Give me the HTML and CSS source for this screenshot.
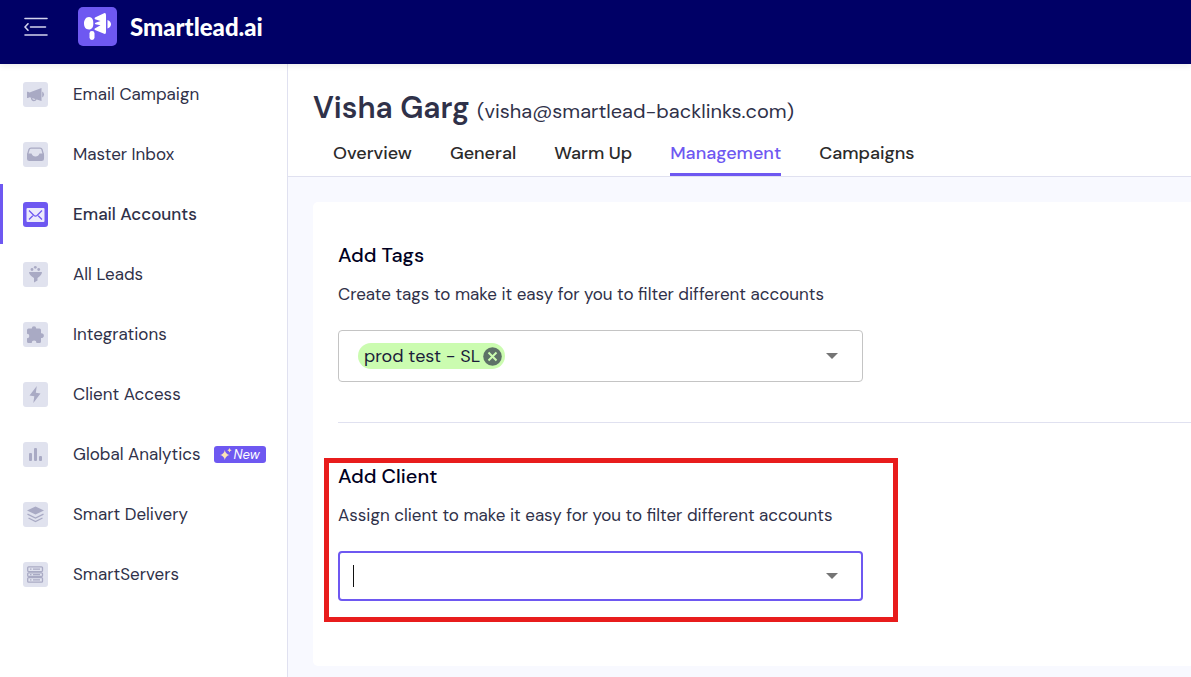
FILE: index.html
```html
<!DOCTYPE html>
<html lang="en">
<head>
    <meta charset="UTF-8">
    <meta name="viewport" content="width=device-width, initial-scale=1.0">
    <title>Smartlead.ai - Email Accounts</title>
    <link rel="stylesheet" href="styles.css">
</head>
<body>
    <header class="topbar">
        <button class="menu-toggle" type="button" aria-label="Collapse menu">
            <svg width="24" height="20" viewBox="0 0 24 20" fill="none" stroke="#d3d4ee" stroke-width="1.6" stroke-linecap="round">
                <path d="M1 1.500H23M6.500 10H21.500M1 18H23M4 6.800L1 10L4 13.200"/>
            </svg>
        </button>
        <a class="brand" href="#">
            <svg width="39" height="39" viewBox="0 0 39 39">
                <rect width="39" height="39" rx="5" fill="#6e58f1"/>
                <g fill="#fff">
                    <path d="M11 10C15 10 15.500 14 15.300 17C15.300 20 14 22.500 11 22.500C7.500 22.500 6 19.500 6 16.500C6 13.500 7.500 10 11 10Z"/>
                    <path d="M17 10.500L25.500 6.400Q28 5.300 28 8V25Q28 27.800 25.500 26.500L17 23Q15.500 22 17.200 21.200L22.500 18.300L17.500 17.200Q16 16.500 17.500 15.800L22.500 14L17 12.300Q16 11.300 17 10.500Z"/>
                    <path d="M29.500 13Q33 14.500 33 17.300Q33 20 29.500 21.600Z"/>
                    <rect x="11.500" y="24" width="5" height="9" rx="2.400"/>
                </g>
            </svg>
            <span>Smartlead.ai</span>
        </a>
    </header>

    <div class="layout">
        <nav class="sidebar">
            <a class="nav-item" href="#">
                <svg class="nav-icon" viewBox="0 0 25 25">
                    <path d="M4 9.800H5L6.500 10.500L18.500 6V19L6.500 15.300L5 16H4Z"/>
                    <path d="M19.200 9.500Q21 10.500 21 12.500Q21 14.500 19.200 15.500Z"/>
                    <path class="line" d="M8.500 15.800Q9 18.500 11 18.500Q13 18.500 13 17"/>
                </svg>
                <span>Email Campaign</span>
            </a>
            <a class="nav-item" href="#">
                <svg class="nav-icon" viewBox="0 0 25 25">
                    <path class="line" d="M4.600 12.500L6 7.500Q6.400 6.200 8 6.200H17Q18.600 6.200 19 7.500L20.400 12.500V16"/>
                    <path d="M4 11.500H8.500Q9.500 14.500 12.500 14.500Q15.500 14.500 16.500 11.500H21V16.500Q21 19 18.500 19H6.500Q4 19 4 16.500Z"/>
                </svg>
                <span>Master Inbox</span>
            </a>
            <a class="nav-item active" href="#">
                <svg class="nav-icon" viewBox="0 0 25 25">
                    <rect x="3.500" y="6" width="18" height="14" rx="1"/>
                    <path class="line" d="M6 8.500L11 13.500Q12.500 14.700 14 13.500L19 8.500M6 17.500L9.800 13.700M19 17.500L15.200 13.700"/>
                </svg>
                <span>Email Accounts</span>
            </a>
            <a class="nav-item" href="#">
                <svg class="nav-icon" viewBox="0 0 25 25">
                    <circle cx="9" cy="7.500" r="1.400"/>
                    <circle cx="12.300" cy="5.300" r="1.400"/>
                    <circle cx="15.700" cy="7.500" r="1.400"/>
                    <path d="M6 10H19Q19 13 14.500 16V18.500L11 20.500V16Q6 13 6 10Z"/>
                </svg>
                <span>All Leads</span>
            </a>
            <a class="nav-item" href="#">
                <svg class="nav-icon" viewBox="0 0 25 25">
                    <path d="M5.500 6.500H8.800A2.200 2.200 0 1 1 13.200 6.500H16.500Q18 6.500 18 8V11.300A2.400 2.400 0 1 1 18 16V19.500Q18 21 16.500 21H13.500A2.400 2.400 0 0 0 8.700 21H5.500Q4 21 4 19.500V16.300A2.300 2.300 0 0 0 4 11.700V8Q4 6.500 5.500 6.500Z"/>
                </svg>
                <span>Integrations</span>
            </a>
            <a class="nav-item" href="#">
                <svg class="nav-icon" viewBox="0 0 25 25">
                    <path d="M13.800 4L6.500 13.500L11.300 14.300L10.300 21L17.500 11.500L12.800 10.800Z"/>
                </svg>
                <span>Client Access</span>
            </a>
            <a class="nav-item" href="#">
                <svg class="nav-icon" viewBox="0 0 25 25">
                    <rect x="6" y="11" width="3" height="8" rx="1"/>
                    <rect x="11" y="6" width="3" height="13" rx="1"/>
                    <rect x="16" y="14" width="3" height="5" rx="1"/>
                </svg>
                <span>Global Analytics</span>
                <span class="badge">
                    <svg width="12" height="12" viewBox="0 0 12 12" fill="#fbe3b5">
                        <path d="M4.800 2Q5.600 6.200 9.600 7Q5.600 7.800 4.800 12Q4 7.800 0 7Q4 6.200 4.800 2Z"/>
                        <path d="M9.500 0Q9.900 1.800 11.700 2.200Q9.900 2.600 9.500 4.400Q9.100 2.600 7.300 2.200Q9.100 1.800 9.500 0Z"/>
                    </svg>
                    New
                </span>
            </a>
            <a class="nav-item" href="#">
                <svg class="nav-icon" viewBox="0 0 25 25">
                    <path d="M12.500 4.500L21 8.500L12.500 12.500L4 8.500Z"/>
                    <path class="line" d="M4.500 12.200L12.500 16L20.500 12.200M5.500 16L12.500 19.500L19.500 16"/>
                </svg>
                <span>Smart Delivery</span>
            </a>
            <a class="nav-item" href="#">
                <svg class="nav-icon" viewBox="0 0 25 25">
                    <g class="line">
                        <rect x="4.700" y="4.800" width="14.800" height="4.800" rx="1"/>
                        <rect x="4.700" y="10.800" width="14.800" height="3.600" rx="1"/>
                        <rect x="4.700" y="15.600" width="14.800" height="4.600" rx="1"/>
                        <path d="M7 7.200H8.500M10 7.200H17M7 12.600H8.500M10 12.600H17M7 17.900H8.500M10 17.900H17"/>
                    </g>
                </svg>
                <span>SmartServers</span>
            </a>
        </nav>

        <main class="content">
            <div class="account-header">
                <h1>Visha Garg <small>(visha@smartlead-backlinks.com)</small></h1>
                <nav class="tabs">
                    <a href="#">Overview</a>
                    <a href="#">General</a>
                    <a href="#">Warm Up</a>
                    <a class="active" href="#">Management</a>
                    <a href="#">Campaigns</a>
                </nav>
            </div>

            <div class="card">
                <section class="setting">
                    <h2><label for="tags">Add Tags</label></h2>
                    <p>Create tags to make it easy for you to filter different accounts</p>
                    <div class="field">
                        <span class="chip">
                            prod test - SL
                            <button type="button" aria-label="Remove tag">
                                <svg width="19" height="19" viewBox="0 0 19 19">
                                    <circle cx="9.500" cy="9.500" r="9.300" fill="#5d7167"/>
                                    <path d="M5.500 5.500L13.500 13.500M13.500 5.500L5.500 13.500" stroke="#cbfcb0" stroke-width="2"/>
                                </svg>
                            </button>
                        </span>
                        <input type="text" id="tags">
                        <button class="arrow" type="button" aria-label="Open tags">
                            <svg width="12" height="6" viewBox="0 0 12 6"><path d="M0 0H12L6 6Z" fill="#757575"/></svg>
                        </button>
                    </div>
                </section>

                <section class="setting highlighted">
                    <h2><label for="client">Add Client</label></h2>
                    <p>Assign client to make it easy for you to filter different accounts</p>
                    <div class="field focused">
                        <span class="cursor"></span>
                        <input type="text" id="client">
                        <button class="arrow" type="button" aria-label="Open clients">
                            <svg width="12" height="6" viewBox="0 0 12 6"><path d="M0 0H12L6 6Z" fill="#757575"/></svg>
                        </button>
                    </div>
                </section>
            </div>
        </main>
    </div>
</body>
</html>
```
FILE: styles.css
```css
* {
    box-sizing: border-box;
}
body {
    margin: 0;
    min-height: 100vh;
    display: flex;
    flex-direction: column;
    font-family: "DM Sans", Inter, sans-serif;
    font-size: 17px;
    color: #2f3149;
    background: white;
}
a {
    color: inherit;
    text-decoration: none;
}
button {
    display: flex;
    padding: 0;
    border: none;
    background: none;
    cursor: pointer;
}

/* Top bar */
.topbar {
    display: flex;
    align-items: center;
    gap: 30px;
    height: 64px;
    padding: 0 24px 11px;
    background: #000066;
    box-shadow: 0 2px 6px rgba(0, 0, 0, 0.08);
    position: relative;
}
.brand {
    display: flex;
    align-items: center;
    gap: 13px;
    color: white;
    font-family: Lato, sans-serif;
    font-size: 24px;
    font-weight: 900;
}

.layout {
    display: flex;
    flex: 1;
}

/* Sidebar */
.sidebar {
    flex: 0 0 288px;
    border-right: 1px solid #e0e1f0;
}
.nav-item {
    display: flex;
    align-items: center;
    height: 60px;
    padding-left: 20px;
    border-left: 3px solid transparent;
}
.nav-item.active {
    border-left-color: #6e58f1;
    font-weight: 500;
}
.nav-icon {
    width: 25px;
    height: 25px;
    margin-right: 25px;
    border-radius: 3px;
    background: #e0e2ee;
    fill: #a9aac4;
}
.nav-icon .line {
    fill: none;
    stroke: #a9aac4;
    stroke-width: 1.3px;
}
.nav-item.active .nav-icon {
    background: #6e58f1;
    fill: #eceafc;
}
.nav-item.active .line {
    stroke: #6e58f1;
}
.badge {
    display: flex;
    align-items: center;
    gap: 2px;
    height: 17px;
    margin-left: 13px;
    padding: 0 6px;
    border-radius: 3px;
    background: #6e58f1;
    color: white;
    font-size: 13px;
    font-style: italic;
}

/* Account header */
.content {
    flex: 1;
    min-width: 0;
    background: #f8f9ff;
}
.account-header {
    padding: 25px 25px 0;
    border-bottom: 1px solid #e0e1f0;
    background: white;
}
h1 {
    margin: 0;
    font-size: 30px;
    font-weight: 600;
    line-height: 38px;
}
h1 small {
    font-size: 20px;
    font-weight: 400;
}
.tabs {
    display: flex;
    gap: 38px;
    padding: 4px 20px 0;
    color: #2b2b2b;
    font-size: 18px;
    font-weight: 500;
}
.tabs a {
    height: 42px;
    line-height: 38px;
}
.tabs .active {
    border-bottom: 3px solid #6e58f1;
    color: #6e58f1;
}

/* Settings card */
.card {
    margin: 25px 0 11px 25px;
    padding: 0 0 65px 25px;
    border-radius: 5px 0 0 5px;
    background: white;
}
.setting {
    padding-top: 38px;
}
.setting + .setting {
    margin-top: 40px;
    border-top: 1px solid #e0e1f0;
}
.setting h2 {
    margin: 0 0 12px;
    color: #000022;
    font-size: 20px;
    font-weight: 500;
    line-height: 30px;
}
.setting p {
    margin: 0 0 24px;
    line-height: 24px;
}
.field {
    display: flex;
    align-items: center;
    max-width: 525px;
    height: 52px;
    padding: 0 24px 0 19px;
    border: 1px solid #c4c4c4;
    border-radius: 4px;
}
.field input {
    flex: 1;
    min-width: 0;
    border: none;
    outline: none;
    background: none;
    font: inherit;
}
.field.focused {
    height: 50px;
    padding: 0 23px 0 13px;
    border: 2px solid #6e58f1;
}
.cursor {
    width: 1px;
    height: 22px;
    background: #111;
}
.chip {
    display: flex;
    align-items: center;
    gap: 3px;
    height: 26px;
    padding: 0 3px 0 6px;
    border-radius: 13px;
    background: #cbfcb0;
    color: #1b1d3a;
    font-size: 18px;
}

/* Red frame round the client setting */
.highlighted {
    position: relative;
}
.highlighted::after {
    content: "";
    box-sizing: border-box;
    position: absolute;
    top: 35px;
    left: -14px;
    bottom: -21px;
    width: 574px;
    border: 5px solid #e81c1c;
    pointer-events: none;
}
```
